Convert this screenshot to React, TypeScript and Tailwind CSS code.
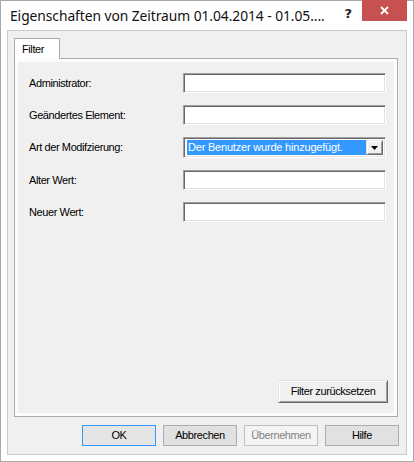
import React from 'react';

const sunken =
  'border border-t-[#a0a0a0] border-l-[#a0a0a0] border-r-white border-b-white shadow-[inset_1px_1px_0_#696969,inset_-1px_-1px_0_#e3e3e3]';
const raised =
  'border border-t-[#e3e3e3] border-l-[#e3e3e3] border-r-[#696969] border-b-[#696969] shadow-[inset_1px_1px_0_#ffffff,inset_-1px_-1px_0_#a0a0a0] bg-[#f0f0f0]';

const fields = ['Administrator:', 'Geändertes Element:', 'Art der Modifzierung:', 'Alter Wert:', 'Neuer Wert:'];

function Field({ label, combo }: { label: string; combo?: boolean }) {
  return (
    <div className="flex items-center">
      <span className="w-[154px]">{label}</span>
      {combo ? (
        <div className={`w-[203px] h-[21px] bg-white flex p-[2px] pl-[3px] ${sunken}`}>
          <div className="flex-1 bg-[#3399ff] text-white flex items-center pl-[1px] leading-none tracking-[-0.2px]">
            Der Benutzer wurde hinzugefügt.
          </div>
          <div className={`w-[17px] flex items-center justify-center ${raised}`}>
            <svg width="7" height="4" viewBox="0 0 7 4">
              <path d="M0 0h7L3.5 4z" fill="#000" />
            </svg>
          </div>
        </div>
      ) : (
        <div className={`w-[203px] h-[20px] bg-white ${sunken}`} />
      )}
    </div>
  );
}

function DlgButton({ children, primary, disabled }: { children: React.ReactNode; primary?: boolean; disabled?: boolean }) {
  const look = disabled
    ? 'bg-[#f4f4f4] border-[#bfbfbf] text-[#838383]'
    : primary
      ? 'bg-[#e5e5e5] border-[#3399ff] text-black'
      : 'bg-[#e1e1e1] border-[#adadad] text-black';
  return (
    <div className={`w-[74px] h-[21px] border flex items-center justify-center ${look}`}>{children}</div>
  );
}

export default function App() {
  return (
    <div className="w-[414px] h-[462px] bg-white border border-[#a9a9a9] flex flex-col font-['Liberation_Sans',sans-serif] text-[11px] tracking-[-0.4px] text-black">
      {/* caption */}
      <div className="h-[29px] flex items-start shrink-0">
        <span className="pl-[9px] pt-[6px] font-['Noto_Sans',sans-serif] text-[13.8px] tracking-[-0.05px] leading-[18px] text-[#111]">
          Eigenschaften von Zeitraum 01.04.2014 - 01.05....
        </span>
        <span className="ml-auto mr-[10px] pt-[3px] font-['DejaVu_Sans',sans-serif] font-bold text-[13px] tracking-normal text-[#222]">
          ?
        </span>
        <div className="-mt-px mr-[6px] w-[45px] h-[21px] bg-[#c75050] flex items-center justify-center">
          <svg width="9" height="9" viewBox="0 0 9 9">
            <path d="M1 1l7 7M8 1L1 8" stroke="#fff" strokeWidth="1.8" />
          </svg>
        </div>
      </div>

      {/* client area */}
      <div className="mx-[6px] mb-[6px] flex-1 border border-[#cacaca] bg-[#f0f0f0] flex flex-col pt-[7px] pl-[6px] pr-[8px]">
        <div className="relative z-10 -mb-px w-[46px] h-[21px] bg-white border border-b-0 border-[#acacac] pl-[7px] pt-[2px]">
          Filter
        </div>
        <div className="h-[359px] border border-[#acacac] bg-[#fcfcfc] p-[3px] flex">
          <div className="flex-1 bg-[#f0f0f0] flex flex-col pt-[11px] pl-[11px] pr-[6px] pb-[10px]">
            <div className="flex flex-col gap-[12px]">
              {fields.map((f, i) => (
                <Field key={f} label={f} combo={i === 2} />
              ))}
            </div>
            <div className={`mt-auto self-end w-[110px] h-[23px] flex items-center justify-center ${raised}`}>
              Filter zurücksetzen
            </div>
          </div>
        </div>
        <div className="mt-[8px] flex justify-end gap-[7px] mr-[-1px]">
          <DlgButton primary>OK</DlgButton>
          <DlgButton>Abbrechen</DlgButton>
          <DlgButton disabled>Übernehmen</DlgButton>
          <DlgButton>Hilfe</DlgButton>
        </div>
      </div>
    </div>
  );
}
